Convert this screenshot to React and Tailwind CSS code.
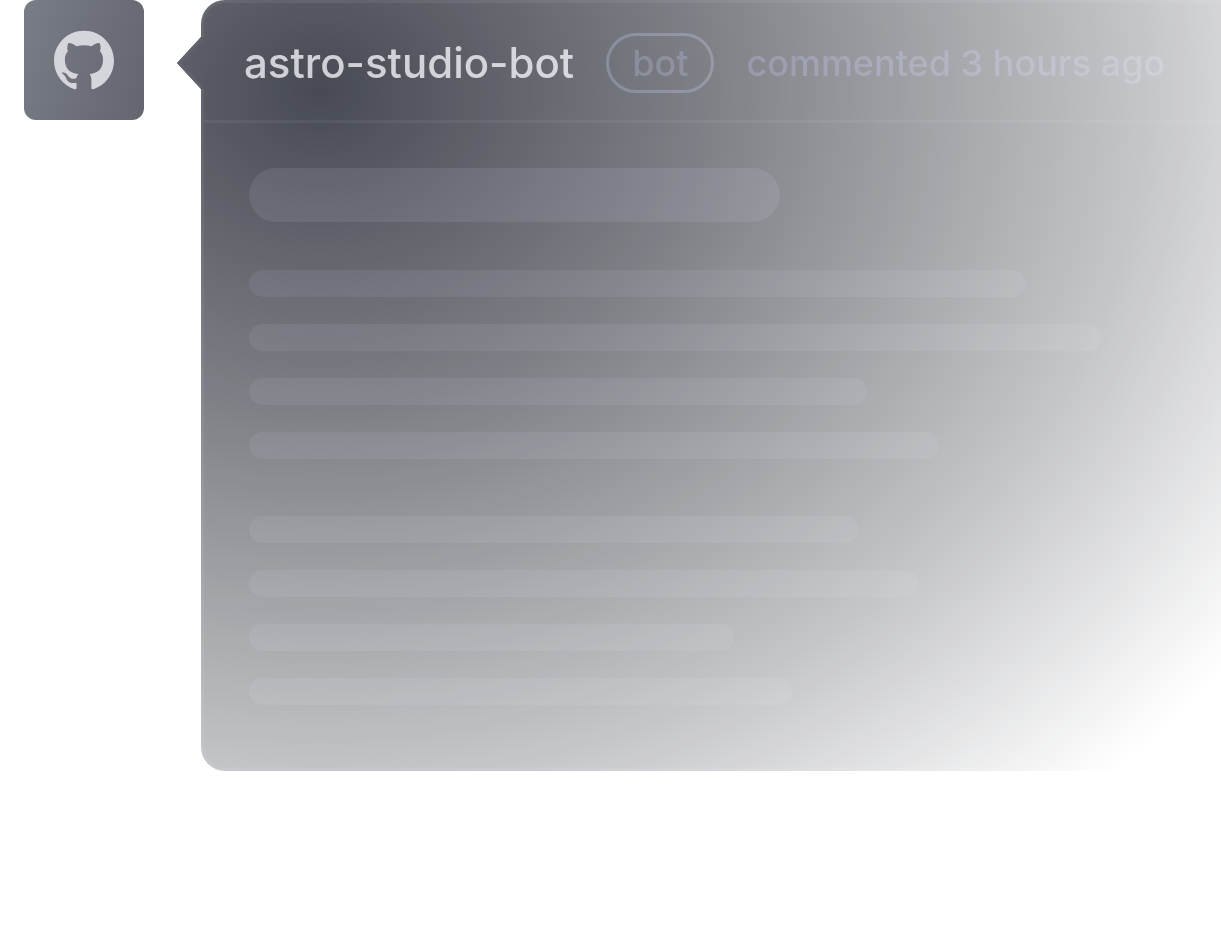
import React from "react";

const paragraphs = [
  ["w-[777px]", "w-[852px]", "w-[618px]", "w-[690px]"],
  ["w-[609px]", "w-[669px]", "w-[485px]", "w-[543px]"],
];

function GithubMark() {
  return (
    <svg viewBox="0 0 24 24" className="size-[60px] overflow-visible" fill="#d5d6dc" role="img" aria-label="GitHub">
      <path d="M12 .297c-6.63 0-12 5.373-12 12 0 5.303 3.438 9.8 8.205 11.385.6.113.82-.258.82-.577 0-.285-.01-1.04-.015-2.04-3.338.724-4.042-1.61-4.042-1.61C4.422 18.07 3.633 17.7 3.633 17.7c-1.087-.744.084-.729.084-.729 1.205.084 1.838 1.236 1.838 1.236 1.07 1.835 2.809 1.305 3.495.998.108-.776.417-1.305.76-1.605-2.665-.3-5.466-1.332-5.466-5.93 0-1.31.465-2.38 1.235-3.22-.135-.303-.54-1.523.105-3.176 0 0 1.005-.322 3.3 1.23.96-.267 1.98-.399 3-.405 1.02.006 2.04.138 3 .405 2.28-1.552 3.285-1.23 3.285-1.23.645 1.653.24 2.873.12 3.176.765.84 1.23 1.91 1.23 3.22 0 4.61-2.805 5.625-5.475 5.92.42.36.81 1.096.81 2.22 0 1.606-.015 2.896-.015 3.286 0 .315.21.69.825.57C20.565 22.092 24 17.592 24 12.297c0-6.627-5.373-12-12-12" />
    </svg>
  );
}

export default function App() {
  return (
    <main className="min-h-screen overflow-hidden bg-white pl-6 font-['Inter',sans-serif]">
      <article className="flex items-start gap-[33px]">
        <div className="flex size-[120px] shrink-0 items-center justify-center rounded-xl bg-linear-105 from-[#797d85] to-[#636570]">
          <GithubMark />
        </div>
        <div className="flex min-w-0 flex-1 items-start [mask-image:radial-gradient(1137px_951px_at_143px_90px,rgb(0_0_0/0.8),rgb(0_0_0/0.56)_34%,rgb(0_0_0/0.26)_72%,transparent)]">
          <svg viewBox="0 0 27 52" className="z-10 mt-[37px] -mr-[3px] h-[52px] w-[27px] shrink-0" aria-hidden="true">
            <path d="M27 0h-3L0 26l24 26h3z" fill="#191d28" />
            <path d="M24 0 0 26l24 26 2-2L4 26 26 2z" fill="#222632" />
          </svg>
          <div className="min-w-0 flex-1 overflow-hidden rounded-l-3xl border-y-3 border-l-3 border-[#272b38] bg-[#191d28]">
            <header className="flex h-[120px] items-center gap-8 border-b-3 border-[#252936] pt-[3px] pl-10 whitespace-nowrap">
              <h1 className="text-[42px] leading-[60px] font-medium text-[#c2c4cc]">astro-studio-bot</h1>
              <span className="flex h-[60px] items-center rounded-full border-3 border-[#42475f] px-[23px] text-[36px] font-medium text-[#3e425c]">
                bot
              </span>
              <p className="text-[36px] leading-[60px] font-[450] text-[#3c4162]">commented 3 hours ago</p>
            </header>
            <div className="flex flex-col gap-12 px-[45px] pt-[45px] pb-[63px]">
              <div className="h-[54px] w-[531px] max-w-full rounded-full bg-[#2b2f3e]" />
              <div className="flex flex-col gap-[57px]">
                {paragraphs.map((lines, i) => (
                  <div key={i} className="flex flex-col gap-[27px]">
                    {lines.map((width) => (
                      <div key={width} className={`h-[27px] max-w-full rounded-full bg-[#272b38] ${width}`} />
                    ))}
                  </div>
                ))}
              </div>
            </div>
          </div>
        </div>
      </article>
    </main>
  );
}
